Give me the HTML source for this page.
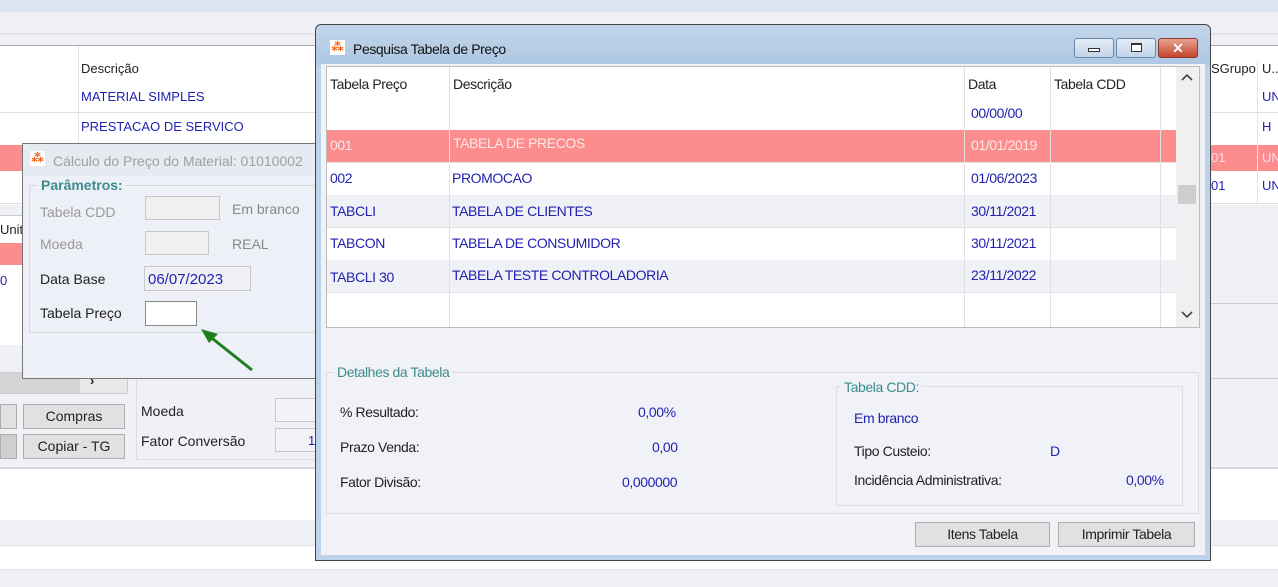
<!DOCTYPE html>
<html><head><meta charset="utf-8"><style>
*{margin:0;padding:0;box-sizing:border-box}
body{width:1278px;height:587px;overflow:hidden;background:#f0f1f7;font-family:"Liberation Sans",sans-serif;font-size:13px;color:#222;position:relative}
.a{position:absolute;white-space:nowrap}
.b{color:#2222b0}
.n{font-family:"Liberation Sans Narrow","Liberation Sans",sans-serif;font-size:14px;letter-spacing:-0.4px}
.btn{position:absolute;background:#e1e1e1;border:1px solid #adadad;text-align:center}
.box{position:absolute;border:1px solid #c8c8c8;background:#f0f0f0}
.s{font-size:14px}
</style></head><body>
<div class="a" style="left:0;top:0;width:1278px;height:12px;background:#dbe4ef"></div>
<div class="a" style="left:0;top:33px;width:1278px;height:2px;background:#e2e3e8"></div>
<div class="a" style="left:0;top:45px;width:1278px;height:160px;background:#fff;border-top:1px solid #aaa"></div>
<div class="a" style="left:78px;top:46px;width:1px;height:160px;background:#e5e5e5"></div>
<div class="a" style="left:0;top:112px;width:1278px;height:1px;background:#e0e0e0"></div>
<div class="a" style="left:0;top:145px;width:1278px;height:26px;background:#fd8d8d"></div>
<div class="a" style="left:0;top:203px;width:1278px;height:1px;background:#ddd"></div>
<div class="a" style="left:81px;top:61px">Descrição</div>
<div class="a b" style="left:81px;top:89px">MATERIAL SIMPLES</div>
<div class="a b" style="left:81px;top:119px">PRESTACAO DE SERVICO</div>
<div class="a" style="left:1211px;top:61px">SGrupo</div>
<div class="a" style="left:1257px;top:61px;width:21px;height:145px;border-left:1px solid #e5e5e5"></div>
<div class="a" style="left:1262px;top:61px">U..</div>
<div class="a b" style="left:1262px;top:89px">UN</div>
<div class="a b" style="left:1262px;top:119px">H</div>
<div class="a" style="left:1211px;top:150px;color:#fde">01</div>
<div class="a" style="left:1262px;top:150px;color:#fde">UN</div>
<div class="a b" style="left:1211px;top:178px">01</div>
<div class="a b" style="left:1262px;top:178px">UN</div>
<div class="a" style="left:0;top:215px;width:25px;height:130px;background:#fff;border-top:1px solid #ccc"></div>
<div class="a" style="left:0;top:222px">Unitá</div>
<div class="a" style="left:0;top:243px;width:25px;height:22px;background:#fd8d8d"></div>
<div class="a b" style="left:0;top:273px">0</div>
<div class="a" style="left:0;top:372px;width:128px;height:22px;background:#e8e8e8;border:1px solid #ccc"></div>
<div class="a" style="left:0;top:373px;width:80px;height:20px;background:#d4d4d4"></div>
<div class="a" style="left:90px;top:373px;font-weight:bold">›</div>
<div class="btn" style="left:0;top:404px;width:17px;height:25px"></div>
<div class="btn" style="left:0;top:434px;width:17px;height:25px;background:#cfcfcf"></div>
<div class="btn s" style="left:23px;top:404px;width:102px;height:25px;line-height:23px">Compras</div>
<div class="btn s" style="left:23px;top:434px;width:102px;height:25px;line-height:23px">Copiar - TG</div>
<div class="a" style="left:136px;top:370px;width:190px;height:90px;border:1px solid #ddd;border-top:none"></div>
<div class="a s" style="left:141px;top:403px">Moeda</div>
<div class="a s" style="left:141px;top:433px">Fator Conversão</div>
<div class="box" style="left:275px;top:398px;width:45px;height:24px;background:#f3f3f7"></div>
<div class="box" style="left:275px;top:428px;width:45px;height:24px;background:#f3f3f7"></div>
<div class="a b" style="left:308px;top:433px">1</div>
<div class="a" style="left:0;top:467px;width:1278px;height:53px;background:#fff;border-top:2px solid #d6d6da"></div>
<div class="a" style="left:0;top:545px;width:1278px;height:25px;background:#fff;border-top:1px solid #e2e2e2;border-bottom:1px solid #e2e2e2"></div>
<div class="a" style="left:1210px;top:303px;width:68px;height:1px;background:#ccc"></div>
<div class="a" style="left:1210px;top:378px;width:68px;height:1px;background:#ccc"></div>
<!-- small dialog -->
<div class="a" style="left:22px;top:143px;width:300px;height:236px;background:#eef0f7;border:1px solid #777;border-right:none"></div>
<div class="a" style="left:23px;top:144px;width:299px;height:32px;background:#e6eaf1"></div>
<div class="a" style="left:30px;top:151px;width:15px;height:15px;background:#fff;color:#f26b1d;font-size:12px;line-height:15px;text-align:center;font-weight:bold">⁂</div>
<div class="a" style="left:53px;top:153px;color:#a0a0a0;font-size:14px">Cálculo do Preço do Material: 01010002</div>
<div class="a" style="left:29px;top:185px;width:295px;height:148px;border:1px solid #d8d8d8"></div>
<div class="a" style="left:38px;top:177px;background:#eef0f7;padding:0 3px;color:#3d8c8c;font-weight:bold;font-size:14px">Parâmetros:</div>
<div class="a s" style="left:40px;top:204px;color:#999">Tabela CDD</div>
<div class="box" style="left:145px;top:196px;width:75px;height:24px"></div>
<div class="a s" style="left:232px;top:201px;color:#888">Em branco</div>
<div class="a s" style="left:40px;top:236px;color:#999">Moeda</div>
<div class="box" style="left:145px;top:231px;width:64px;height:24px"></div>
<div class="a s" style="left:232px;top:236px;color:#888">REAL</div>
<div class="a s" style="left:40px;top:271px">Data Base</div>
<div class="box" style="left:144px;top:266px;width:107px;height:25px;background:#f0f0f4"></div>
<div class="a b" style="left:148px;top:271px;font-size:15px">06/07/2023</div>
<div class="a s" style="left:40px;top:305px">Tabela Preço</div>
<div class="a" style="left:145px;top:301px;width:52px;height:25px;background:#fff;border:1px solid #888"></div>
<svg class="a" style="left:198px;top:326px" width="60" height="50"><line x1="54" y1="44" x2="10" y2="9" stroke="#1e7e1e" stroke-width="3"/><polygon points="3,3 20,8 11,17" fill="#1e7e1e"/></svg>
<!-- main modal -->
<div class="a" style="left:315px;top:24px;width:896px;height:537px;background:#bcd3ea;border:1px solid #444;border-radius:6px 6px 0 0"></div>
<div class="a" style="left:316px;top:25px;width:894px;height:40px;background:linear-gradient(#c3d6ea,#adc7e3);border-radius:6px 6px 0 0"></div>
<div class="a" style="left:330px;top:40px;width:15px;height:15px;background:#fff;color:#f26b1d;font-size:12px;line-height:15px;text-align:center;font-weight:bold">⁂</div>
<div class="a n" style="left:353px;top:41px;color:#111">Pesquisa Tabela de Preço</div>
<div class="a" style="left:1074px;top:38px;width:40px;height:20px;border:1px solid #6d87a8;border-radius:3px;background:linear-gradient(#e5eef8,#c2d4e8)"><div style="margin:9px 13px 0;width:12px;height:4px;border:1px solid #333;background:#fff"></div></div>
<div class="a" style="left:1116px;top:38px;width:40px;height:20px;border:1px solid #6d87a8;border-radius:3px;background:linear-gradient(#e5eef8,#c2d4e8)"><div style="margin:4px 14px 0;width:11px;height:9px;border:1px solid #333;border-top-width:2px;background:#fff"></div></div>
<div class="a" style="left:1158px;top:38px;width:40px;height:20px;border:1px solid #8a3b2e;border-radius:3px;background:linear-gradient(#e9a493,#c4442c);color:#fff;font-weight:bold;font-size:14px;text-align:center;line-height:18px">✕</div>
<div class="a" style="left:321px;top:64px;width:884px;height:491px;background:#f1f2f8"></div>
<div class="a" style="left:326px;top:66px;width:874px;height:262px;background:#fff;border:1px solid #bbb"></div>
<div class="a" style="left:327px;top:130px;width:849px;height:32px;background:#fd8d8d"></div>
<div class="a" style="left:327px;top:195px;width:849px;height:33px;background:#f0f1f6"></div>
<div class="a" style="left:327px;top:260px;width:849px;height:33px;background:#f0f1f6"></div>
<div class="a" style="left:327px;top:162px;width:849px;height:1px;background:#e2e2e2"></div>
<div class="a" style="left:327px;top:227px;width:849px;height:1px;background:#e2e2e2"></div>
<div class="a" style="left:327px;top:292px;width:849px;height:1px;background:#e2e2e2"></div>
<div class="a" style="left:449px;top:67px;width:1px;height:260px;background:#e0e0e0"></div>
<div class="a" style="left:964px;top:67px;width:1px;height:260px;background:#e0e0e0"></div>
<div class="a" style="left:1050px;top:67px;width:1px;height:260px;background:#e0e0e0"></div>
<div class="a" style="left:1160px;top:67px;width:1px;height:260px;background:#e0e0e0"></div>
<div class="a" style="left:1176px;top:67px;width:23px;height:260px;background:#f0f0f0"></div>
<div class="a" style="left:1178px;top:185px;width:18px;height:19px;background:#cdcdcd"></div>
<svg class="a" style="left:1181px;top:74px" width="12" height="8"><path d="M1 6 L6 1 L11 6" fill="none" stroke="#444" stroke-width="1.6"/></svg>
<svg class="a" style="left:1181px;top:311px" width="12" height="8"><path d="M1 1 L6 6 L11 1" fill="none" stroke="#444" stroke-width="1.6"/></svg>
<div class="a n" style="left:330px;top:76px">Tabela Preço</div>
<div class="a n" style="left:453px;top:76px">Descrição</div>
<div class="a n" style="left:968px;top:76px">Data</div>
<div class="a n" style="left:1054px;top:76px">Tabela CDD</div>
<div class="a n b" style="left:971px;top:105px">00/00/00</div>
<div class="a n" style="left:330px;top:137px;color:#fde8e8">001</div>
<div class="a n" style="left:453px;top:135px;color:#fde8e8">TABELA DE PRECOS</div>
<div class="a n" style="left:971px;top:137px;color:#fde8e8">01/01/2019</div>
<div class="a n b" style="left:330px;top:170px">002</div><div class="a n b" style="left:452px;top:170px">PROMOCAO</div><div class="a n b" style="left:971px;top:170px">01/06/2023</div>
<div class="a n b" style="left:330px;top:203px">TABCLI</div><div class="a n b" style="left:452px;top:203px">TABELA DE CLIENTES</div><div class="a n b" style="left:971px;top:203px">30/11/2021</div>
<div class="a n b" style="left:330px;top:235px">TABCON</div><div class="a n b" style="left:452px;top:235px">TABELA DE CONSUMIDOR</div><div class="a n b" style="left:971px;top:235px">30/11/2021</div>
<div class="a n b" style="left:330px;top:269px">TABCLI 30</div><div class="a n b" style="left:452px;top:267px">TABELA TESTE CONTROLADORIA</div><div class="a n b" style="left:971px;top:267px">23/11/2022</div>
<div class="a" style="left:326px;top:372px;width:873px;height:142px;border:1px solid #ddd"></div>
<div class="a n" style="left:334px;top:364px;background:#f1f2f8;padding:0 3px;color:#3d8c8c">Detalhes da Tabela</div>
<div class="a n" style="left:340px;top:404px">% Resultado:</div><div class="a n b" style="left:638px;top:404px">0,00%</div>
<div class="a n" style="left:340px;top:439px">Prazo Venda:</div><div class="a n b" style="left:652px;top:439px">0,00</div>
<div class="a n" style="left:340px;top:474px">Fator Divisão:</div><div class="a n b" style="left:622px;top:474px">0,000000</div>
<div class="a" style="left:836px;top:386px;width:347px;height:120px;border:1px solid #ddd"></div>
<div class="a n" style="left:841px;top:379px;background:#f1f2f8;padding:0 3px;color:#3d8c8c">Tabela CDD:</div>
<div class="a n b" style="left:854px;top:410px">Em branco</div>
<div class="a n" style="left:854px;top:443px">Tipo Custeio:</div><div class="a n b" style="left:1050px;top:443px">D</div>
<div class="a n" style="left:854px;top:472px">Incidência Administrativa:</div><div class="a n b" style="left:1126px;top:472px">0,00%</div>
<div class="btn n" style="left:915px;top:522px;width:135px;height:25px;line-height:23px">Itens Tabela</div>
<div class="btn n" style="left:1058px;top:522px;width:137px;height:25px;line-height:23px">Imprimir Tabela</div>
</body></html>
